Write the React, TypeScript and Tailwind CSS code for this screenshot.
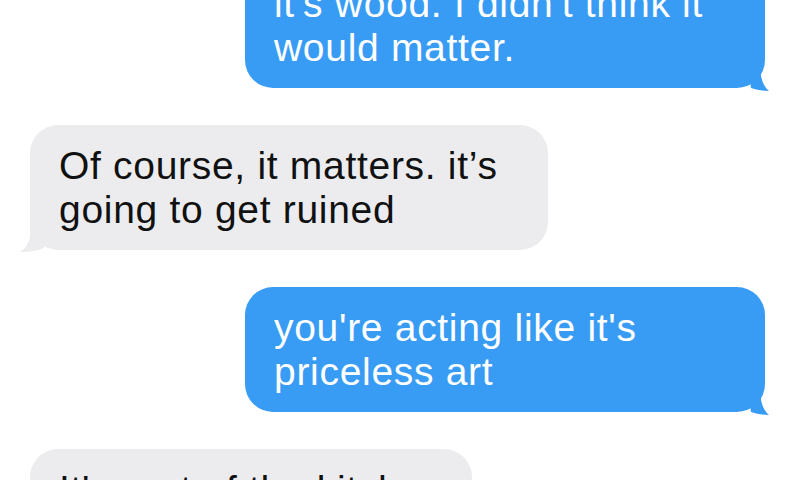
import React from "react";

const BLUE = "#389cf4";
const GRAY = "#ececef";

function BlueBubble({ lines, className = "" }: { lines: string[]; className?: string }) {
  return (
    <div className={`relative self-end mr-[35px] w-[520px] h-[125px] shrink-0 rounded-[28px] bg-[#389cf4] pl-[29px] pt-[19px] text-white ${className}`}>
      {lines.map((l, i) => (
        <div key={i} className="leading-[44px] whitespace-nowrap">{l}</div>
      ))}
      <svg className="absolute right-[-12px] bottom-[-4px]" width="30" height="30" viewBox="0 0 30 30">
        <path d="M0 0 L14 0 L14 14 Q16 24 22 29 Q12 29 4 26 Z" fill={BLUE} />
      </svg>
    </div>
  );
}

function GrayBubble({ lines, width, className = "" }: { lines: string[]; width: string; className?: string }) {
  return (
    <div className={`relative ml-[30px] ${width} h-[125px] shrink-0 rounded-[28px] bg-[#ececef] pl-[29px] pt-[19px] text-[#111] ${className}`}>
      {lines.map((l, i) => (
        <div key={i} className="leading-[44px] whitespace-nowrap">{l}</div>
      ))}
      <svg className="absolute left-[-10px] bottom-[-3px]" width="30" height="30" viewBox="0 0 30 30">
        <path d="M30 0 L10 0 L10 14 Q8 24 0 29 Q14 29 24 25 Z" fill={GRAY} />
      </svg>
    </div>
  );
}

export default function App() {
  return (
    <div
      className="w-[800px] h-[480px] overflow-hidden bg-white flex flex-col gap-[37px] text-[39px] tracking-[0.7px]"
      style={{ fontFamily: '"Liberation Sans", Arial, sans-serif' }}
    >
      <BlueBubble className="mt-[-37px]" lines={["it's wood. I didn't think it", "would matter."]} />
      <GrayBubble width="w-[518px]" lines={["Of course, it matters. it’s", "going to get ruined"]} />
      <BlueBubble lines={["you're acting like it's", "priceless art"]} />
      <GrayBubble width="w-[442px]" lines={["It's part of the kitchen", "and"]} />
    </div>
  );
}
